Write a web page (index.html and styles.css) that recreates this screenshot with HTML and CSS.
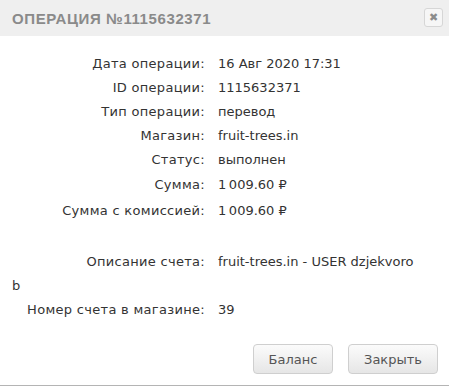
FILE: index.html
```html
<!DOCTYPE html>
<html>
<head>
  <title>Операция №1115632371</title>
  <link rel="stylesheet" href="styles.css">
</head>
<body>

<div class="dialog">
  <div class="dialog-header">
    <span class="dialog-title">Операция №1115632371</span>
    <span class="dialog-close">&#10006;</span>
  </div>

  <div class="dialog-body">
    <div class="row"><span class="label">Дата операции:</span><span class="value">16 Авг 2020 17:31</span></div>
    <div class="row"><span class="label">ID операции:</span><span class="value">1115632371</span></div>
    <div class="row"><span class="label">Тип операции:</span><span class="value">перевод</span></div>
    <div class="row"><span class="label">Магазин:</span><span class="value">fruit-trees.in</span></div>
    <div class="row"><span class="label">Статус:</span><span class="value">выполнен</span></div>
    <div class="row row-sum"><span class="label">Сумма:</span><span class="value">1&#8201;009.60 ₽</span></div>
    <div class="row row-sum"><span class="label">Сумма с комиссией:</span><span class="value">1&#8201;009.60 ₽</span></div>
    <div class="row row-empty"></div>
    <div class="row"><span class="label">Описание счета:</span><span class="value value-long">fruit-trees.in - USER dzjekvorob</span></div>
    <div class="row"><span class="label">Номер счета в магазине:</span><span class="value">39</span></div>
  </div>

  <div class="dialog-buttons">
    <button class="btn btn-balance">Баланс</button>
    <button class="btn btn-close">Закрыть</button>
  </div>
</div>

</body>
</html>
```

FILE: styles.css
```css
body {
  margin: 0;
  font-family: "DejaVu Sans", sans-serif;
  background-color: #fff;
}

.dialog {
  width: 449px;
  height: 386px;
  box-sizing: border-box;
  border-bottom: 1px solid #b4b4b4;
  background-color: #fff;
}

.dialog-header {
  height: 36px;
  background-color: #efefef;
  display: flex;
  align-items: center;
  justify-content: space-between;
  padding: 0 6px 0 12px;
}

.dialog-title {
  font-family: "Liberation Sans", sans-serif;
  font-size: 15px;
  font-weight: bold;
  color: #8a8a8a;
  text-transform: uppercase;
  letter-spacing: 0.6px;
}

.dialog-close {
  width: 17px;
  height: 17px;
  border: 1px solid #d6d6d6;
  border-radius: 3px;
  background-color: #f6f6f6;
  color: #8c8c8c;
  font-size: 11px;
  font-weight: bold;
  display: flex;
  align-items: center;
  justify-content: center;
  margin-top: -1px;
}

.dialog-body {
  padding: 16px 32px 0 12px;
  font-size: 13px;
  color: #333;
}

.row {
  line-height: 24px;
}

.row-sum {
  line-height: 26px;
}

.row-empty {
  height: 26px;
}

.label {
  display: inline-block;
  width: 193px;
  text-align: right;
  margin-right: 13px;
  letter-spacing: 0.3px;
}

.value-long {
  word-break: break-all;
}

.dialog-buttons {
  display: flex;
  justify-content: flex-end;
  gap: 15px;
  padding: 22px 11px 0 0;
}

.btn {
  height: 30px;
  padding: 0;
  font-family: "DejaVu Sans", sans-serif;
  font-size: 13px;
  color: #555;
  border: 1px solid #cfcfcf;
  border-radius: 4px;
  background: linear-gradient(#fbfbfb, #e6e6e6);
}

.btn-balance {
  width: 80px;
}

.btn-close {
  width: 90px;
}
```
